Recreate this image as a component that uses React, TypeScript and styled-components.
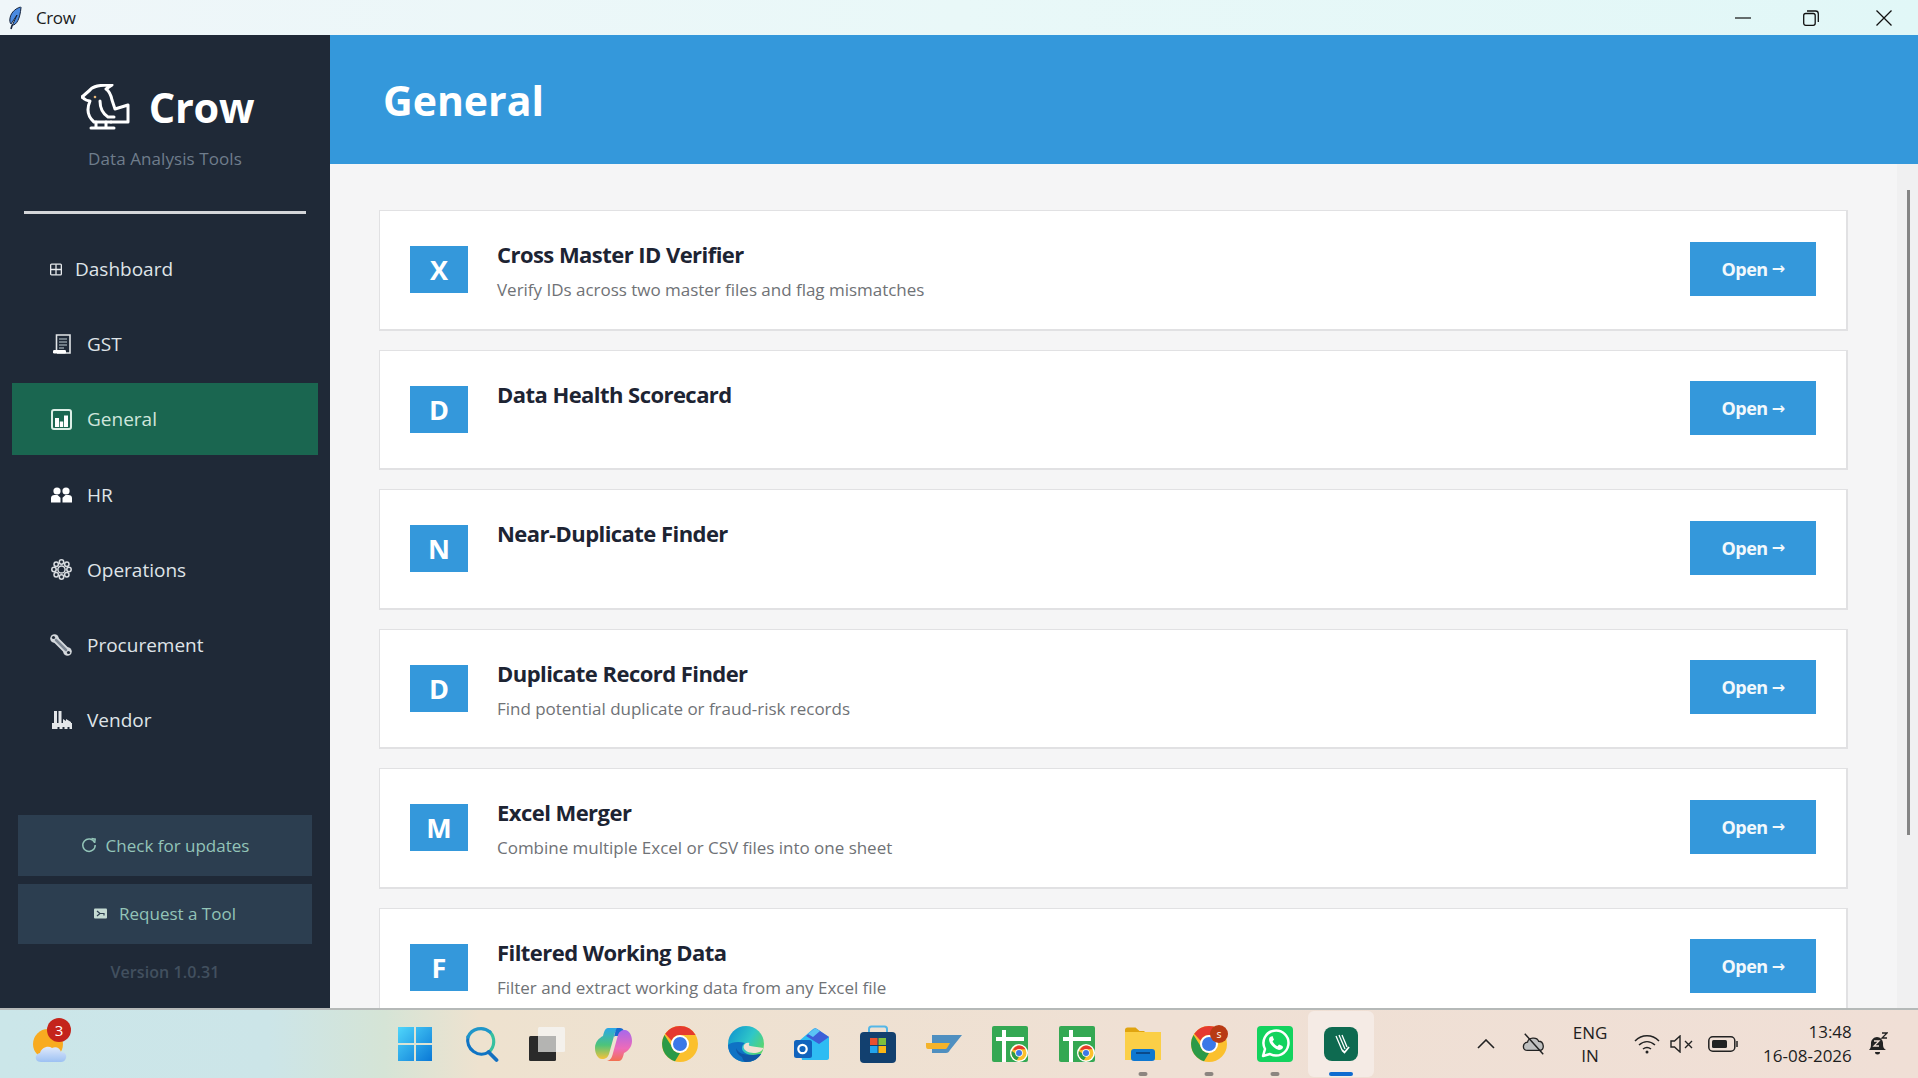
import styled, { createGlobalStyle } from 'styled-components';

const SANS = '"Open Sans", "Noto Sans", "Liberation Sans", sans-serif';

const GlobalStyle = createGlobalStyle`
  html, body {
    margin: 0;
    padding: 0;
    height: 100%;
    overflow: hidden;
    font-family: ${SANS};
  }
  #root {
    height: 100%;
  }
  * {
    box-sizing: border-box;
  }
`;

const Screen = styled.div`
  width: 1918px;
  height: 1078px;
  display: flex;
  flex-direction: column;
  overflow: hidden;
`;

const TitleBar = styled.div`
  height: 35px;
  flex: none;
  display: flex;
  align-items: center;
  padding-left: 8px;
  color: #1b1b1b;
  background: linear-gradient(90deg, #eff6f9 0%, #e9f8f8 50%, #e1f7f7 100%);
`;

const TitleText = styled.span`
  margin-left: 14px;
  font-size: 17px;
  letter-spacing: -0.4px;
`;

const WindowButtons = styled.div`
  margin-left: auto;
  display: flex;
  align-items: center;
  padding-right: 26px;
  gap: 54.5px;
`;

const RestoreGlyph = styled.svg`
  margin: 0 2.5px 0 -2.5px;
`;

const Body = styled.div`
  flex: 1;
  min-height: 0;
  display: flex;
`;

const Sidebar = styled.aside`
  width: 330px;
  flex: none;
  display: flex;
  flex-direction: column;
  background: #1f2937;
  padding: 48px 12px 0;
`;

const Brand = styled.div`
  display: flex;
  align-items: center;
  justify-content: center;
  gap: 18px;
  height: 48px;
  padding-left: 5px;
`;

const BrandName = styled.div`
  color: #fff;
  font-size: 41.5px;
  font-weight: 700;
  letter-spacing: -0.2px;
  line-height: 48px;
`;

const Tagline = styled.div`
  margin-top: 16px;
  text-align: center;
  color: #6f7d8c;
  font-size: 17px;
  letter-spacing: 0.08px;
  line-height: 24px;
`;

const Divider = styled.hr`
  margin: 40px 12px 19px;
  height: 3px;
  border: 0;
  background: #d4d6d9;
`;

const Nav = styled.nav`
  display: flex;
  flex-direction: column;
  gap: 3.2px;
`;

const NavItem = styled.div<{ $active?: boolean }>`
  height: 72px;
  display: flex;
  align-items: center;
  padding-left: 38px;
  gap: 15px;
  color: ${(p) => (p.$active ? '#cfe5dc' : '#dfe4e8')};
  background: ${(p) => (p.$active ? '#1a6650' : 'transparent')};
  font-size: 19px;
`;

const NavIcon = styled.span`
  width: 22px;
  height: 24px;
  display: flex;
  align-items: center;
  justify-content: center;
`;

const DashNavIcon = styled(NavIcon)`
  width: 12px;
  margin-right: -2px;
`;

const Footer = styled.div`
  margin-top: auto;
  display: flex;
  flex-direction: column;
  padding: 0 6px 16px;
  gap: 8px;
`;

const SideButton = styled.div<{ $gap: number }>`
  height: 60.5px;
  display: flex;
  align-items: center;
  justify-content: center;
  gap: ${(p) => p.$gap}px;
  background: #2c3e50;
  color: #93c4b8;
  font-size: 17px;
`;

const Version = styled.div`
  height: 40px;
  display: flex;
  align-items: center;
  justify-content: center;
  color: #42505f;
  font-size: 16px;
  font-weight: 600;
  letter-spacing: 0.1px;
`;

const Main = styled.main`
  flex: 1;
  min-width: 0;
  display: flex;
  flex-direction: column;
  background: #f5f5f6;
`;

const Header = styled.header`
  height: 129px;
  flex: none;
  display: flex;
  align-items: center;
  padding-left: 53px;
  background: #3498db;
  color: #fff;
  font-size: 41px;
  font-weight: 700;
`;

const ScrollArea = styled.div`
  flex: 1;
  min-height: 0;
  display: flex;
  overflow: hidden;
`;

const CardList = styled.div`
  flex: 1;
  display: flex;
  flex-direction: column;
  gap: 19px;
  padding: 46px 49px 0 49px;
`;

const Card = styled.div`
  height: 120.5px;
  flex: none;
  display: flex;
  align-items: center;
  padding: 0 30px;
  background: #fff;
  border: 1px solid #e1e1e3;
  border-width: 1px 2px 2px 1px;
`;

const Letter = styled.div`
  width: 58px;
  height: 47px;
  flex: none;
  display: flex;
  align-items: center;
  justify-content: center;
  background: #3498db;
  color: #fff;
  font-size: 27px;
  font-weight: 700;
`;

const CardText = styled.div`
  flex: 1;
  align-self: flex-start;
  margin-left: 29px;
  padding-top: 27px;
`;

const CardTitle = styled.div`
  color: #1d2433;
  font-size: 22px;
  font-weight: 700;
  letter-spacing: -0.55px;
  line-height: 32px;
`;

const CardDesc = styled.div`
  margin-top: 8px;
  color: #6f7276;
  font-size: 17px;
  letter-spacing: -0.02px;
  line-height: 24px;
`;

const OpenButton = styled.div`
  width: 126px;
  height: 54px;
  margin-bottom: 2px;
  display: flex;
  align-items: center;
  justify-content: center;
  gap: 4px;
  background: #3498db;
  color: #f2f8fc;
  font-size: 18px;
  font-weight: 700;
  letter-spacing: -0.5px;
`;

const Arrow = styled.span`
  font-family: "DejaVu Sans", sans-serif;
  font-size: 16px;
  font-weight: 700;
`;

const ScrollTrack = styled.div`
  width: 21px;
  flex: none;
  padding: 26px 8px 0 10px;
  background: #f0f0f1;
`;

const ScrollThumb = styled.div`
  width: 3px;
  height: 645px;
  background: #858585;
`;

const TaskBar = styled.footer`
  height: 70px;
  flex: none;
  display: flex;
  align-items: center;
  border-top: 2px solid #b5b9b8;
  background: linear-gradient(90deg, #cbe6e9 0%, #cce5e8 14%, #d5e4d6 20%, #eee2cf 25%, #efe0d4 60%, #f0dfd6 100%);
`;

const Weather = styled.div`
  width: 382px;
  flex: none;
  padding-left: 32px;
  display: flex;
  align-items: center;
`;

const WeatherWrap = styled.div`
  position: relative;
  display: flex;
`;

const WeatherBadge = styled.span`
  position: absolute;
  top: -4px;
  left: 15px;
  width: 24px;
  height: 24px;
  border-radius: 50%;
  display: flex;
  align-items: center;
  justify-content: center;
  background: #c4241b;
  color: #fff;
  font-size: 15px;
`;

const Apps = styled.div`
  display: flex;
  align-items: center;
`;

const AppSlot = styled.div<{ $active?: boolean }>`
  position: relative;
  width: 66.17px;
  height: 66px;
  display: flex;
  align-items: center;
  justify-content: center;
  border-radius: 6px;
  background: ${(p) => (p.$active ? '#f5ebe5' : 'transparent')};
`;

const RunDot = styled.span<{ $active?: boolean }>`
  position: absolute;
  bottom: 1px;
  left: 50%;
  transform: translateX(-50%);
  width: ${(p) => (p.$active ? 24 : 9)}px;
  height: 4px;
  border-radius: 2px;
  background: ${(p) => (p.$active ? '#0f6cd0' : '#8c8580')};
`;

const BadgedIcon = styled.span`
  position: relative;
  display: flex;
`;

const Badge = styled.span`
  position: absolute;
  top: -1px;
  right: -1px;
  width: 18px;
  height: 18px;
  border-radius: 50%;
  display: flex;
  align-items: center;
  justify-content: center;
  background: #b83a14;
  color: #fbe4d6;
  font-size: 9px;
  font-weight: 600;
`;

const Tray = styled.div`
  margin-left: auto;
  display: flex;
  align-items: center;
  color: #1e1e1e;
  padding-right: 28.6px;
`;

const TrayIcon = styled.span<{ $w: number; $ml?: number }>`
  width: ${(p) => p.$w}px;
  margin-left: ${(p) => p.$ml ?? 0}px;
  display: flex;
  align-items: center;
  justify-content: center;
`;

const Lang = styled.div`
  width: 50px;
  margin: 0 18px 0 19.5px;
  text-align: center;
  font-size: 17px;
  line-height: 23px;
  letter-spacing: -0.1px;
`;

const Clock = styled.div`
  width: 110px;
  margin-left: 3.8px;
  text-align: right;
  font-size: 17px;
  line-height: 24px;
`;

const Feather = () => (
  <svg width="14" height="24" viewBox="0 0 14 24">
    <path d="M12.5 1C6 3 2 8 1.8 14c0 2 .5 3.2 1.2 4l6-9-4.6 10.2C8.5 19 12 13 13 1.5z" fill="#4a8ae0" stroke="#17233a" strokeWidth="1" />
    <path d="M4.4 18.5 3 23" stroke="#17233a" strokeWidth="1.6" />
  </svg>
);

const BirdLogo = () => (
  <svg width="50" height="46" viewBox="0 0 50 46" fill="none" stroke="#fff" strokeWidth="3" strokeLinecap="round" strokeLinejoin="round">
    <path d="M1 13 L9 6 C12 2 18 1 31 1 L25 5 C28 7 30 11 31 16 L34 25 L47 21 L47 38 L30 38" />
    <path d="M1 13 C4 16 7 17 9 17 C6 24 6 32 13 38 L30 38" />
    <path d="M19 17 C19 24 21 29 27 33 L33 33" />
    <path d="M10 44 L33 44 M15 38 L15 44 M25 38 L25 44" />
    <circle cx="14" cy="13" r="1.3" fill="#e8b878" stroke="none" />
  </svg>
);

const icons = {
  dashboard: (
    <svg width="13" height="13" viewBox="0 0 13 13" fill="none" stroke="#e6e9ec" strokeWidth="1.4">
      <rect x=".7" y=".7" width="11.6" height="11.6" rx="1" />
      <path d="M.7 6.5h11.6M6.5.7v11.6" />
    </svg>
  ),
  gst: (
    <svg width="20" height="20" viewBox="-2 0 20 20" fill="none">
      <path d="M3.5 16V1h13.5v18H4" stroke="#e2e5e8" strokeWidth="1.6" />
      <path d="M6 5h8M6 8h8M6 11h8M6 14h5" stroke="#8b96a0" strokeWidth="1.4" />
      <rect x="0" y="16" width="13" height="3.4" rx="1.2" fill="#fff" />
    </svg>
  ),
  general: (
    <svg width="21" height="21" viewBox="0 0 21 21" fill="none">
      <rect x="1" y="1" width="19" height="19" rx="2" stroke="#dceee6" strokeWidth="2" />
      <path d="M4 9h4v9H4zM8.8 12.5h3.4V18H8.8zM13 6.5h4V18h-4z" fill="#fff" />
    </svg>
  ),
  hr: (
    <svg width="21" height="16" viewBox="0 0 21 16" fill="#fff">
      <circle cx="6" cy="4" r="3.6" />
      <circle cx="15" cy="4" r="3.6" />
      <path d="M0 15.6V11c0-2 1.5-3 3.5-3h3l3 2.8V15.6zM21 15.6V11c0-2-1.5-3-3.5-3h-3l-3 2.8V15.6z" />
    </svg>
  ),
  operations: (
    <svg width="21" height="21" viewBox="0 0 21 21" fill="none" stroke="#d9dde1" strokeWidth="1.5">
      <circle cx="10.5" cy="10.5" r="3.6" />
      <circle cx="10.5" cy="3" r="2.2" />
      <circle cx="10.5" cy="18" r="2.2" />
      <circle cx="3" cy="10.5" r="2.2" />
      <circle cx="18" cy="10.5" r="2.2" />
      <circle cx="5.2" cy="5.2" r="2.2" />
      <circle cx="15.8" cy="5.2" r="2.2" />
      <circle cx="5.2" cy="15.8" r="2.2" />
      <circle cx="15.8" cy="15.8" r="2.2" />
    </svg>
  ),
  procurement: (
    <svg width="22" height="22" viewBox="0 0 22 22" fill="none" strokeLinecap="round">
      <path d="M5 5 17 17" stroke="#d4d8dc" strokeWidth="6.5" />
      <circle cx="4.5" cy="4.5" r="4.3" fill="#d4d8dc" />
      <circle cx="17.5" cy="17.5" r="4.3" fill="#d4d8dc" />
      <path d="M6 6 16 16" stroke="#7d8793" strokeWidth="2.6" />
      <circle cx="3.5" cy="3.5" r="1.6" fill="#1f2937" />
      <circle cx="18.5" cy="18.5" r="1.6" fill="#1f2937" />
    </svg>
  ),
  vendor: (
    <svg width="21" height="20" viewBox="0 0 21 20" fill="#e3e6e9">
      <path d="M3 1h3v12H3zM7.5 1h3v12h-3zM12 9l3 2V9l5 3v3H12z" />
      <path d="M1 13h20v6h-2.500v-2h-2v2h-3v-2h-2v2h-3v-2h-2v2H1z" />
    </svg>
  ),
};

const RefreshIcon = () => (
  <svg width="16" height="16" viewBox="0 0 16 16" fill="none" stroke="#93c4b8" strokeWidth="1.5">
    <path d="M13.6 5.5A6.2 6.2 0 1 0 14.2 8" />
    <path d="M10.5 1.5 14.2 2.2 13.6 6" />
  </svg>
);

const MailIcon = () => (
  <svg width="13" height="11" viewBox="0 0 13 11">
    <rect width="13" height="10" y=".5" rx="1" fill="#c5dbd4" />
    <path d="M3 3l3 2.5L3 8M6 5.5h4v2" stroke="#2c3e50" strokeWidth="1.2" fill="none" />
  </svg>
);

const WinIcon = () => (
  <svg width="36" height="36" viewBox="0 0 36 36">
    <defs>
      <linearGradient id="win" x1="0" y1="0" x2="1" y2="1">
        <stop offset="0" stopColor="#4fd6fb" />
        <stop offset="1" stopColor="#0a78d6" />
      </linearGradient>
    </defs>
    <path d="M1 1h16v16H1zM19 1h16v16H19zM1 19h16v16H1zM19 19h16v16H19z" fill="url(#win)" />
  </svg>
);

const SearchIcon = () => (
  <svg width="36" height="38" viewBox="0 0 36 38" fill="none" strokeWidth="3.2" strokeLinecap="round">
    <path d="M27 7A14 14 0 0 1 26 27" stroke="#36c0a0" />
    <path d="M26 27A14 14 0 0 1 5 12" stroke="#0f74c4" />
    <path d="M5 12A14 14 0 0 1 27 7" stroke="#1f96c9" />
    <path d="M25.5 27l8 8" stroke="#1470c0" strokeWidth="3.8" />
  </svg>
);

const TaskViewIcon = () => (
  <svg width="36" height="36" viewBox="0 0 36 36">
    <rect x="0" y="10" width="27" height="25" rx="1.5" fill="#2a2a2a" />
    <rect x="9" y="1" width="27" height="25" rx="1.5" fill="#f4f3f1" fillOpacity=".85" />
    <rect x="9" y="10" width="18" height="16" fill="#b4b4b2" />
  </svg>
);

const CopilotIcon = () => (
  <svg width="37" height="35" viewBox="0 0 37 35">
    <defs>
      <linearGradient id="cop1" x1="0" y1="0" x2="0" y2="1">
        <stop offset="0" stopColor="#2aa7e8" />
        <stop offset=".55" stopColor="#4dc47a" />
        <stop offset="1" stopColor="#f6c23a" />
      </linearGradient>
      <linearGradient id="cop2" x1="0" y1="1" x2="0" y2="0">
        <stop offset="0" stopColor="#a868ec" />
        <stop offset=".6" stopColor="#ee6bb8" />
        <stop offset="1" stopColor="#f2704f" />
      </linearGradient>
    </defs>
    <path d="M13 1h12c-4 1-5 4-6 8l-5 18c-1 3-3 5-7 5-4 0-7-5-7-11 0-6 4-10 8-12 1-4 2-8 5-8z" fill="url(#cop1)" />
    <path d="M22 1h3c3 0 5 3 6 8H20c-1 2-1 0 0-3 .5-2 1-4 2-5z" fill="#1769d0" />
    <path d="M13 1h12c-4 1-5 4-6 8l-5 18c-1 3-3 5-7 5-4 0-7-5-7-11 0-6 4-10 8-12 1-4 2-8 5-8z" transform="rotate(180 18.5 17.5)" fill="url(#cop2)" />
  </svg>
);

const ChromeIcon = () => (
  <svg width="36" height="36" viewBox="0 0 36 36">
    <circle cx="18" cy="18" r="18" fill="#fbc02d" />
    <path d="M18 0a18 18 0 0 1 15.6 9H18a9 9 0 0 0-8.4 5.800L3.2 7.8A18 18 0 0 1 18 0z" fill="#e5392f" />
    <path d="M2.5 9A18 18 0 0 0 13 35.3L18 27a9 9 0 0 1-8.5-7z" fill="#2b9a47" />
    <circle cx="18" cy="18" r="9" fill="#fff" />
    <circle cx="18" cy="18" r="7" fill="#3b78e7" />
  </svg>
);

const EdgeIcon = () => (
  <svg width="36" height="36" viewBox="0 0 36 36">
    <defs>
      <linearGradient id="edge" x1="0" y1="0" x2="1" y2=".6">
        <stop offset="0" stopColor="#0c8ed0" />
        <stop offset=".6" stopColor="#2fc7c8" />
        <stop offset="1" stopColor="#5bd66a" />
      </linearGradient>
    </defs>
    <circle cx="18" cy="18" r="18" fill="url(#edge)" />
    <path d="M0 19c0 10 8 17 18 17 7 0 12-3 15-8-8 2-15 1-18-3-2-3-1-6 2-8-6-2-14-1-17 2z" fill="#0f72c4" />
    <path d="M14 31c-4-2-6-5-6-9 2 5 8 7 14 7 4 0 8-.5 11-1-3 5-9 8-15 8-2 0-3-2-4-5z" fill="#0f56a6" />
    <path d="M35.5 22c-1 3-5 5-10 5-5 0-10-3-10-6 0-3 3-5 6-4-1 1-1 3 1 3 3 1 9 1 13 2z" fill="#f1e2d3" />
  </svg>
);

const OutlookIcon = () => (
  <svg width="36" height="34" viewBox="0 0 36 34">
    <path d="M5 14 19 2c1-1 3-1 4 0l12 8v21c0 1-1 2-2 2H8z" fill="#2ebcf3" />
    <path d="M12 9 20 2c1-.8 2-.8 3 0l12 8-10 7z" fill="#3d5fd8" />
    <path d="M14 7l6-5c1-.8 2-.8 3 0l3 2-7 6z" fill="#5ac4f5" />
    <rect x="0" y="13" width="18" height="18" rx="2.5" fill="#1163bd" />
    <circle cx="8.5" cy="22" r="4.2" fill="none" stroke="#fff" strokeWidth="2.2" />
  </svg>
);

const StoreIcon = () => (
  <svg width="36" height="38" viewBox="0 0 36 38">
    <path d="M9 8V4c0-1.500 1-2.500 2.500-2.500h13C26 1.500 27 2.500 27 4v4" fill="none" stroke="#54b7e8" strokeWidth="2" />
    <rect x="0" y="7" width="36" height="31" rx="4" fill="#12406f" />
    <path d="M10 13h7.5v7H10z" fill="#e9502f" />
    <path d="M18.5 13H26v7h-7.500z" fill="#7ebf3c" />
    <path d="M10 21h7.5v7H10z" fill="#22a5ed" />
    <path d="M18.5 21H26v7h-7.500z" fill="#fab616" />
  </svg>
);

const SlantIcon = () => (
  <svg width="36" height="18" viewBox="0 0 36 18">
    <path d="M6 0h30L24 15c-1 2-2 3-4 3H6z" fill="#4f8fc0" />
    <path d="M0 8h24l-3 5c-.5.7-1 1-2 1H2c-1.500 0-2-1-2-3z" fill="#f4b32b" />
  </svg>
);

const SheetChromeIcon = () => (
  <svg width="36" height="36" viewBox="0 0 36 36">
    <rect width="36" height="36" rx="2" fill="#34a853" />
    <path d="M10 4h4v7h18v4H14v21h-4V15H4v-4h6z" fill="#fff" />
    <circle cx="27" cy="27" r="9" fill="#fff" />
    <circle cx="27" cy="27" r="7.5" fill="#fbc02d" />
    <path d="M27 19.5a7.5 7.5 0 0 1 6.5 3.8h-6.5l-6 1A7.5 7.5 0 0 1 27 19.500z" fill="#e5392f" />
    <path d="M19.8 25a7.5 7.5 0 0 0 5 9.200l2.500-4z" fill="#2b9a47" />
    <circle cx="27" cy="27" r="3.8" fill="#fff" />
    <circle cx="27" cy="27" r="3" fill="#3b78e7" />
  </svg>
);

const FolderIcon = () => (
  <svg width="36" height="34" viewBox="0 0 36 34">
    <path d="M0 3c0-1.500 1-2.500 2.500-2.500h8l4 3.500H20l-4 4H0z" fill="#e0a40f" />
    <path d="M0 5h36v28H0z" fill="#fbcf47" />
    <rect x="6" y="22" width="24" height="12" rx="3" fill="#0f78d0" />
    <path d="M11 26h14" stroke="#0a3f78" strokeWidth="1.6" />
  </svg>
);

const WhatsappIcon = () => (
  <svg width="36" height="36" viewBox="0 0 36 36">
    <rect width="36" height="36" rx="4" fill="#13d35e" />
    <path d="M6 30l2-7A12.5 12.5 0 1 1 13 28z" fill="none" stroke="#fff" strokeWidth="2.5" strokeLinejoin="round" />
    <path d="M13 11c-1 1-1.500 3 0 6 2 3 5 6 9 7 2 0 3.500-1 4-2.500l-.5-1.500-3.500-1.500-1.500 1.800c-2-.8-4-2.800-5-5l1.500-1.500L15.500 10z" fill="#fff" />
  </svg>
);

const CrowAppIcon = () => (
  <svg width="34" height="34" viewBox="0 0 34 34">
    <rect width="34" height="34" rx="8" fill="#0e6a50" />
    <path d="M12 9l6 14M15 8l6 14M18 8l5 12" stroke="#fff" strokeWidth="1.3" fill="none" />
    <path d="M18 23l2.500 2.500L25 20" stroke="#fff" strokeWidth="1.8" fill="none" />
  </svg>
);

const WeatherIcon = () => (
  <svg width="37" height="44" viewBox="0 0 37 44">
    <defs>
      <linearGradient id="cloud" x1="0" y1="0" x2="0" y2="1">
        <stop offset="0" stopColor="#dfe9fb" />
        <stop offset="1" stopColor="#9dc1f3" />
      </linearGradient>
    </defs>
    <circle cx="16" cy="22" r="15" fill="#f8ab20" />
    <path d="M9 40c-4 0-6-3-5-6 1-2 3-3 4-3 1-5 8-8 12-5 4-2 8 0 9 4 4 0 6 3 5 6-1 3-3 4-5 4z" fill="url(#cloud)" />
  </svg>
);

const tools = [
  { letter: 'X', title: 'Cross Master ID Verifier', desc: 'Verify IDs across two master files and flag mismatches' },
  { letter: 'D', title: 'Data Health Scorecard' },
  { letter: 'N', title: 'Near-Duplicate Finder' },
  { letter: 'D', title: 'Duplicate Record Finder', desc: 'Find potential duplicate or fraud-risk records' },
  { letter: 'M', title: 'Excel Merger', desc: 'Combine multiple Excel or CSV files into one sheet' },
  { letter: 'F', title: 'Filtered Working Data', desc: 'Filter and extract working data from any Excel file' },
];

const navItems = [
  { key: 'dashboard', label: 'Dashboard' },
  { key: 'gst', label: 'GST' },
  { key: 'general', label: 'General', active: true },
  { key: 'hr', label: 'HR' },
  { key: 'operations', label: 'Operations' },
  { key: 'procurement', label: 'Procurement' },
  { key: 'vendor', label: 'Vendor' },
] as const;

function App() {
  return (
    <Screen>
      <GlobalStyle />
      <TitleBar>
        <Feather />
        <TitleText>Crow</TitleText>
        <WindowButtons>
          <svg width="16" height="2" viewBox="0 0 16 2"><path d="M0 1h16" stroke="#111" strokeWidth="1.2" /></svg>
          <RestoreGlyph width="16" height="16" viewBox="0 0 16 16" fill="none" stroke="#111" strokeWidth="1.3">
            <rect x=".7" y="3.5" width="11.5" height="11.8" rx="2" />
            <path d="M4 1h8.500c1.600 0 2.800 1.200 2.800 2.800V12" />
          </RestoreGlyph>
          <svg width="16" height="16" viewBox="0 0 16 16" stroke="#111" strokeWidth="1.3"><path d="M.5.5l15 15M15.500.5l-15 15" /></svg>
        </WindowButtons>
      </TitleBar>
      <Body>
        <Sidebar>
          <Brand>
            <BirdLogo />
            <BrandName>Crow</BrandName>
          </Brand>
          <Tagline>Data Analysis Tools</Tagline>
          <Divider />
          <Nav>
            {navItems.map((item) => (
              <NavItem key={item.key} $active={'active' in item}>
                {item.key === 'dashboard' ? (
                  <DashNavIcon>{icons.dashboard}</DashNavIcon>
                ) : (
                  <NavIcon>{icons[item.key]}</NavIcon>
                )}
                {item.label}
              </NavItem>
            ))}
          </Nav>
          <Footer>
            <SideButton $gap={9}><RefreshIcon />Check for updates</SideButton>
            <SideButton $gap={12}><MailIcon />Request a Tool</SideButton>
            <Version>Version 1.0.31</Version>
          </Footer>
        </Sidebar>
        <Main>
          <Header>General</Header>
          <ScrollArea>
            <CardList>
              {tools.map((tool) => (
                <Card key={tool.title}>
                  <Letter>{tool.letter}</Letter>
                  <CardText>
                    <CardTitle>{tool.title}</CardTitle>
                    {tool.desc && <CardDesc>{tool.desc}</CardDesc>}
                  </CardText>
                  <OpenButton>Open<Arrow>→</Arrow></OpenButton>
                </Card>
              ))}
            </CardList>
            <ScrollTrack><ScrollThumb /></ScrollTrack>
          </ScrollArea>
        </Main>
      </Body>
      <TaskBar>
        <Weather>
          <WeatherWrap>
            <WeatherIcon />
            <WeatherBadge>3</WeatherBadge>
          </WeatherWrap>
        </Weather>
        <Apps>
          <AppSlot><WinIcon /></AppSlot>
          <AppSlot><SearchIcon /></AppSlot>
          <AppSlot><TaskViewIcon /></AppSlot>
          <AppSlot><CopilotIcon /></AppSlot>
          <AppSlot><ChromeIcon /></AppSlot>
          <AppSlot><EdgeIcon /></AppSlot>
          <AppSlot><OutlookIcon /></AppSlot>
          <AppSlot><StoreIcon /></AppSlot>
          <AppSlot><SlantIcon /></AppSlot>
          <AppSlot><SheetChromeIcon /></AppSlot>
          <AppSlot><SheetChromeIcon /></AppSlot>
          <AppSlot><FolderIcon /><RunDot /></AppSlot>
          <AppSlot><BadgedIcon><ChromeIcon /><Badge>S</Badge></BadgedIcon><RunDot /></AppSlot>
          <AppSlot><WhatsappIcon /><RunDot /></AppSlot>
          <AppSlot $active><CrowAppIcon /><RunDot $active /></AppSlot>
        </Apps>
        <Tray>
          <TrayIcon $w={24}>
            <svg width="18" height="10" viewBox="0 0 18 10" fill="none" stroke="#222" strokeWidth="1.6"><path d="M1 9l8-8 8 8" /></svg>
          </TrayIcon>
          <TrayIcon $w={24} $ml={24}>
            <svg width="26" height="24" viewBox="0 0 26 24">
              <path d="M6 19c-6 0-6-8 0-9 1-5 10-6 12-1 6 0 7 10 1 10z" fill="#bfc0c0" stroke="#222" strokeWidth="1.4" />
              <path d="M3 1l20 22" stroke="#222" strokeWidth="1.6" />
            </svg>
          </TrayIcon>
          <Lang>ENG<br />IN</Lang>
          <TrayIcon $w={28}>
            <svg width="26" height="20" viewBox="0 0 26 20" fill="none" stroke="#222" strokeWidth="1.5">
              <path d="M1 7c7-7 17-7 24 0M5 11c5-4.500 11-4.500 16 0M9 15c2.500-2 5.500-2 8 0" />
              <circle cx="13" cy="18" r="1.5" fill="#222" stroke="none" />
            </svg>
          </TrayIcon>
          <TrayIcon $w={24} $ml={8}>
            <svg width="23" height="18" viewBox="0 0 23 18" fill="none" stroke="#222" strokeWidth="1.4">
              <path d="M1 6h3.500L10 1v16l-5.500-5H1z" />
              <path d="M15 6l7 7M22 6l-7 7" />
            </svg>
          </TrayIcon>
          <TrayIcon $w={30} $ml={15}>
            <svg width="30" height="16" viewBox="0 0 30 16" fill="none">
              <rect x=".8" y=".8" width="26" height="14.4" rx="4" stroke="#222" strokeWidth="1.5" />
              <rect x="4" y="4" width="15" height="8" rx="1.5" fill="#222" />
              <path d="M29 5v6" stroke="#222" strokeWidth="1.5" />
            </svg>
          </TrayIcon>
          <Clock>13:48<br />16-08-2026</Clock>
          <TrayIcon $w={22} $ml={15.6}>
            <svg width="20" height="24" viewBox="0 0 20 24">
              <path d="M1 18c2-2 2-4 2-7 0-3 3-6 6-6s6 3 6 6c0 3 0 5 3 7z" fill="#222" />
              <path d="M7 20h5a2.500 2.500 0 0 1-5 0z" fill="#222" />
              <path d="M6 9h5l-5 5h5" stroke="#f0dfd6" strokeWidth="1.3" fill="none" />
              <path d="M14 1h5l-5 5h5" stroke="#222" strokeWidth="1.3" fill="none" />
            </svg>
          </TrayIcon>
        </Tray>
      </TaskBar>
    </Screen>
  );
}

export default App;
